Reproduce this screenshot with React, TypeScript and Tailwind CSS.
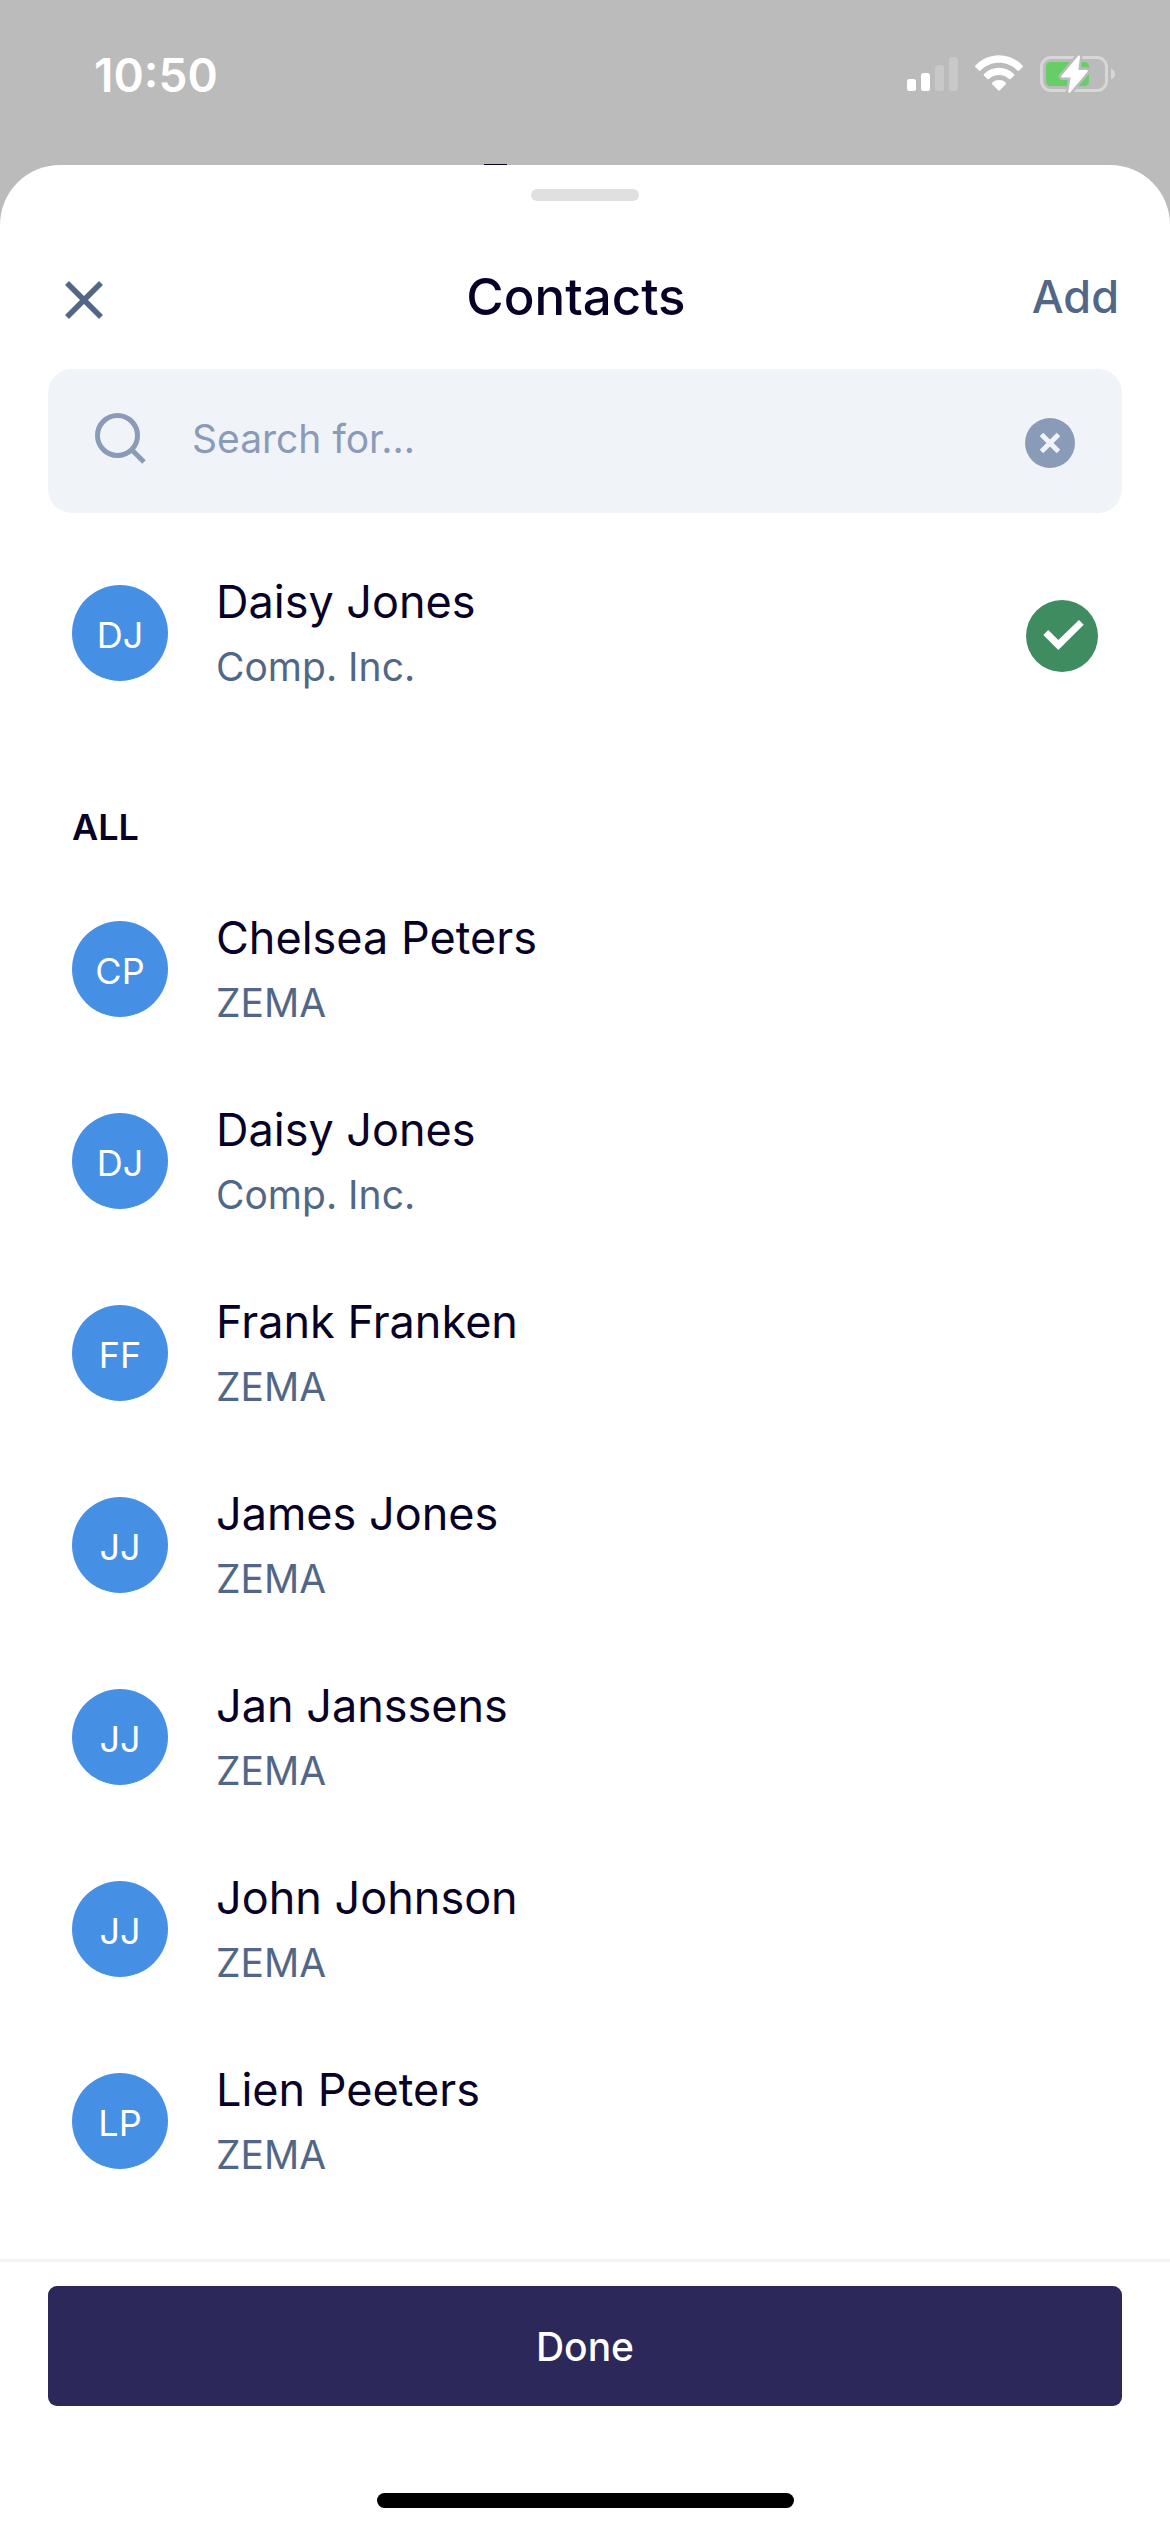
import { useState } from "react";

type Contact = { id: number; name: string; initials: string; company: string };

const contacts: Contact[] = [
  { id: 1, name: "Chelsea Peters", initials: "CP", company: "ZEMA" },
  { id: 2, name: "Daisy Jones", initials: "DJ", company: "Comp. Inc." },
  { id: 3, name: "Frank Franken", initials: "FF", company: "ZEMA" },
  { id: 4, name: "James Jones", initials: "JJ", company: "ZEMA" },
  { id: 5, name: "Jan Janssens", initials: "JJ", company: "ZEMA" },
  { id: 6, name: "John Johnson", initials: "JJ", company: "ZEMA" },
  { id: 7, name: "Lien Peeters", initials: "LP", company: "ZEMA" },
];

function SignalIcon() {
  return (
    <svg width="51" height="38" viewBox="0 0 51 38" fill="#fff" aria-hidden="true">
      <rect x="0" y="24" width="9" height="12" rx="2.5" />
      <rect x="14" y="18" width="9" height="18" rx="2.5" />
      <rect x="28" y="10" width="9" height="26" rx="2.5" opacity="0.2" />
      <rect x="42" y="2" width="9" height="34" rx="2.5" opacity="0.2" />
    </svg>
  );
}

function WifiIcon() {
  return (
    <svg width="48" height="38" viewBox="0 0 48 38" fill="#fff" aria-hidden="true">
      <path d="M0.5 10.4C13.5-3.2 34.5-3.2 47.5 10.4Q48.4 11.4 47.5 12.3L44 15.6Q43.3 16.3 42.5 15.5C32 5.2 16 5.2 5.5 15.5Q4.7 16.3 4 15.6L0.5 12.3Q-0.4 11.4 0.5 10.4Z" />
      <path d="M9 18.9C17.4 10.8 30.6 10.8 39 18.9Q39.9 19.8 39 20.7L35.6 24Q34.9 24.6 34.1 23.9C28.3 18.6 19.7 18.6 13.9 23.9Q13.1 24.6 12.4 24L9 20.7Q8.1 19.8 9 18.9Z" />
      <path d="M17.5 27.4C21.2 24.2 26.8 24.2 30.5 27.4Q31.4 28.3 30.6 29.2L24.9 35.3Q24 36.2 23.1 35.3L17.4 29.2Q16.6 28.3 17.5 27.4Z" />
    </svg>
  );
}

const bolt = "M39 2.500L22.300 22.500H31.800L29.300 37.800L46.800 17H37.300Z";

function BatteryIcon() {
  return (
    <svg width="75" height="40" viewBox="0 0 75 40" aria-hidden="true">
      <rect x="1.500" y="3.500" width="65" height="33" rx="9.500" fill="none" stroke="#d7d7d7" strokeWidth="3" />
      <path d="M71 14.500Q75 16 75 20T71 25.500Z" fill="#d7d7d7" />
      <rect x="6" y="8" width="43" height="24" rx="4.500" fill="#67ce67" />
      <path d={bolt} fill="#bbb" stroke="#bbb" strokeWidth="7" strokeLinejoin="round" />
      <path d={bolt} fill="#fff" stroke="#fff" strokeWidth="2" strokeLinejoin="round" />
    </svg>
  );
}

function ContactRow({ contact, selected = false }: { contact: Contact; selected?: boolean }) {
  return (
    <li>
      <button
        type="button"
        aria-pressed={selected}
        className="flex h-48 w-full items-center px-[72px] text-left"
      >
        <span className="mr-12 flex size-24 shrink-0 items-center justify-center rounded-full bg-[#458fe4] pt-1 text-[36px] leading-[48px] text-white">
          {contact.initials}
        </span>
        <span className="flex grow flex-col pt-0.5">
          <span className="text-[45px] leading-[66px] text-[#080127]">{contact.name}</span>
          <span className="text-[39px] leading-[64px] text-[#526788]">{contact.company}</span>
        </span>
        {selected && (
          <svg className="mt-1.5 shrink-0" width="72" height="72" viewBox="0 0 72 72" aria-hidden="true">
            <circle cx="36" cy="36" r="36" fill="#3f8c61" />
            <path d="M17.300 35L22.300 30L32.300 40L53 20L57.700 24.700L32.300 50Z" fill="#fff" />
          </svg>
        )}
      </button>
    </li>
  );
}

export default function App() {
  const [query, setQuery] = useState("");

  return (
    <div className="flex min-h-screen flex-col bg-[#bbb] font-['Inter',sans-serif]">
      <div className="relative flex h-[165px] shrink-0 items-start justify-between pt-[54px] pr-[55px] pl-[94px]">
        <span className="text-[46px] leading-[42px] font-semibold text-white">10:50</span>
        <div className="flex items-center gap-[17px]">
          <SignalIcon />
          <WifiIcon />
          <BatteryIcon />
        </div>
        <span className="absolute bottom-0 left-[484px] h-px w-[23px] bg-[#080127]" />
      </div>

      <main className="flex grow flex-col rounded-t-[60px] bg-white pt-6">
        <div className="mx-auto h-3 w-[108px] rounded-full bg-[#e0e0e0]" />

        <header className="flex h-[168px] items-center justify-between pt-6 pr-[51px] pl-[60px]">
          <button type="button" aria-label="Close" className="mt-1.5 h-12 w-[60px]">
            <svg width="48" height="48" viewBox="0 0 48 48" fill="none" stroke="#526788" strokeWidth="5.500" aria-hidden="true">
              <path d="M7 7L41 41M41 7L7 41" />
            </svg>
          </button>
          <h1 className="text-[51px] leading-[60px] font-medium text-[#080127]">Contacts</h1>
          <button type="button" className="text-[45px] leading-[60px] font-medium text-[#526788]">
            Add
          </button>
        </header>

        <div className="mx-12 flex h-36 items-center rounded-3xl bg-[#f0f4f9] pr-[47px] pl-[46px]">
          <label htmlFor="contact-search" className="mr-11 shrink-0">
            <svg className="block" width="54" height="58" viewBox="0 0 54 58" fill="none" stroke="#8a9bb8" strokeWidth="5" aria-hidden="true">
              <circle cx="23.500" cy="23.500" r="20" />
              <path d="M37.500 37.500L50 50" />
            </svg>
          </label>
          <input
            id="contact-search"
            type="text"
            aria-label="Search contacts"
            value={query}
            onChange={(e) => setQuery(e.target.value)}
            placeholder="Search for..."
            className="mb-1 min-w-0 grow bg-transparent text-[39px] leading-[60px] text-[#080127] outline-none placeholder:text-[#8a9bb8]"
          />
          <button type="button" aria-label="Clear search" className="mt-1 shrink-0" onClick={() => setQuery("")}>
            <svg className="block" width="50" height="50" viewBox="0 0 50 50" aria-hidden="true">
              <circle cx="25" cy="25" r="25" fill="#8a9bb8" />
              <path d="M16.500 16.500L33.500 33.500M33.500 16.500L16.500 33.500" stroke="#f0f4f9" strokeWidth="5" />
            </svg>
          </button>
        </div>

        <ul className="pt-6">
          <ContactRow contact={contacts[1]} selected />
        </ul>

        <h2 className="px-[72px] pt-[74px] pb-[22px] text-[36px] leading-[48px] font-semibold text-[#080127]">ALL</h2>
        <ul>
          {contacts.map((c) => (
            <ContactRow key={c.id} contact={c} />
          ))}
        </ul>

        <footer className="mt-auto flex flex-col border-t-[3px] border-[#f0f4f9] px-12 py-6">
          <button
            type="button"
            className="h-[120px] w-full rounded-[9px] bg-[#2c285a] pt-0.5 text-[39px] leading-[60px] font-medium text-white"
          >
            Done
          </button>
          <div className="mx-auto mt-[87px] h-[15px] w-[417px] rounded-full bg-black" />
        </footer>
      </main>
    </div>
  );
}
